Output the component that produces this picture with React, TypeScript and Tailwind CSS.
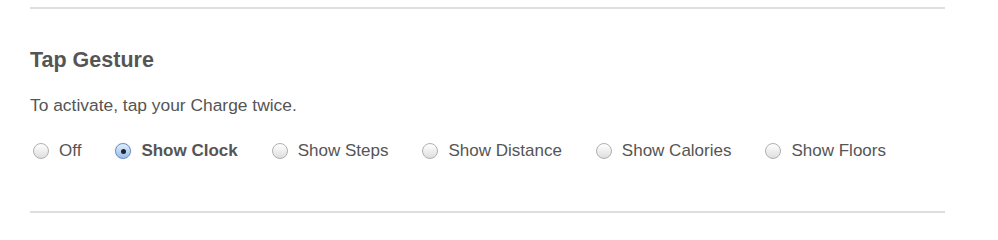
const options = ["Off", "Show Clock", "Show Steps", "Show Distance", "Show Calories", "Show Floors"];

function Radio({ checked }: { checked: boolean }) {
  if (checked) {
    return (
      <span className="flex items-center justify-center w-[16px] h-[16px] rounded-full border border-[#6f8fbd] bg-gradient-to-b from-[#e3eefa] to-[#98bde8] shadow-[0_0_1px_rgba(60,110,180,0.5)] shrink-0">
        <span className="w-[5px] h-[5px] rounded-full bg-[#1b2436]" />
      </span>
    );
  }
  return (
    <span className="w-[16px] h-[16px] rounded-full border border-[#b0b0b0] bg-gradient-to-b from-white to-[#dedede] shrink-0" />
  );
}

export default function App() {
  const selected = "Show Clock";
  return (
    <div className="bg-white w-[998px] h-[214px] pl-[30px] pr-[53px] pt-[7px] text-[#555] font-['Liberation_Sans',Arial,sans-serif]">
      <div className="border-t-2 border-[#dedede]">
        <h3 className="mt-[39px] text-[21.5px] leading-[24px] font-bold">Tap Gesture</h3>
        <p className="mt-[23px] text-[17.4px] leading-[20px]">To activate, tap your Charge twice.</p>
        <div className="mt-[26px] ml-[3px] flex items-center gap-[34px] text-[17px] leading-[20px]">
          {options.map((o) => (
            <label key={o} className="flex items-center gap-[10px]">
              <Radio checked={o === selected} />
              <span className={o === selected ? "font-bold" : ""}>{o}</span>
            </label>
          ))}
        </div>
      </div>
      <div className="mt-[50px] border-t-2 border-[#dedede]" />
    </div>
  );
}
